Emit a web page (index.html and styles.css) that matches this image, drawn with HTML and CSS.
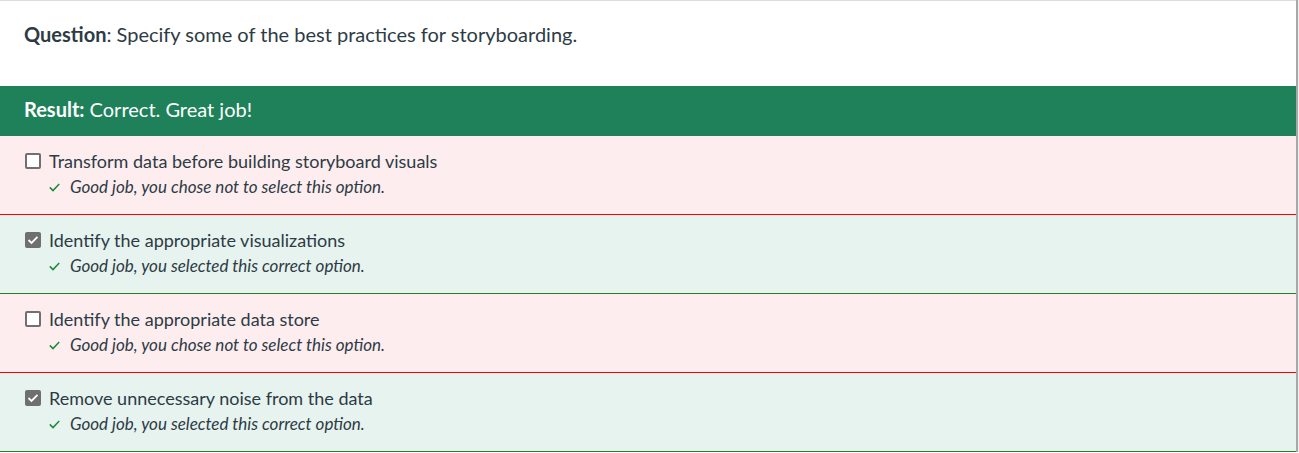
FILE: index.html
```html
<!DOCTYPE html>
<html lang="en">
<head>
<meta charset="utf-8">
<link rel="stylesheet" href="styles.css">
</head>
<body>
<div class="quiz">
  <div class="question"><strong>Question</strong>: Specify some of the best practices for storyboarding.</div>
  <div class="result"><strong>Result:</strong> Correct. Great job!</div>
  <div class="option wrong-bg">
    <div class="opt-line">
      <span class="box"></span>
      <span>Transform data before building storyboard visuals</span>
    </div>
    <div class="feedback">
      <svg class="tick" width="11" height="9" viewBox="0 0 11 9"><path d="M0.8 4.4 L4 7.6 L10.2 1" fill="none" stroke="#1b8a3a" stroke-width="1.5"/></svg>
      <em>Good job, you chose not to select this option.</em>
    </div>
  </div>
  <div class="option right-bg">
    <div class="opt-line">
      <span class="box checked"><svg width="12" height="10" viewBox="0 0 12 10"><path d="M1.5 5 L4.5 8 L10.5 1.8" fill="none" stroke="#fff" stroke-width="1.8"/></svg></span>
      <span>Identify the appropriate visualizations</span>
    </div>
    <div class="feedback">
      <svg class="tick" width="11" height="9" viewBox="0 0 11 9"><path d="M0.8 4.4 L4 7.6 L10.2 1" fill="none" stroke="#1b8a3a" stroke-width="1.5"/></svg>
      <em>Good job, you selected this correct option.</em>
    </div>
  </div>
  <div class="option wrong-bg">
    <div class="opt-line">
      <span class="box"></span>
      <span>Identify the appropriate data store</span>
    </div>
    <div class="feedback">
      <svg class="tick" width="11" height="9" viewBox="0 0 11 9"><path d="M0.8 4.4 L4 7.6 L10.2 1" fill="none" stroke="#1b8a3a" stroke-width="1.5"/></svg>
      <em>Good job, you chose not to select this option.</em>
    </div>
  </div>
  <div class="option right-bg">
    <div class="opt-line">
      <span class="box checked"><svg width="12" height="10" viewBox="0 0 12 10"><path d="M1.5 5 L4.5 8 L10.5 1.8" fill="none" stroke="#fff" stroke-width="1.8"/></svg></span>
      <span>Remove unnecessary noise from the data</span>
    </div>
    <div class="feedback">
      <svg class="tick" width="11" height="9" viewBox="0 0 11 9"><path d="M0.8 4.4 L4 7.6 L10.2 1" fill="none" stroke="#1b8a3a" stroke-width="1.5"/></svg>
      <em>Good job, you selected this correct option.</em>
    </div>
  </div>
</div>
</body>
</html>
```

FILE: styles.css
```css
html, body {
  margin: 0;
  padding: 0;
  background: #ffffff;
}
body {
  font-family: Lato, "Liberation Sans", sans-serif;
  color: #2d3b45;
}
.quiz {
  width: 1296px;
  border-top: 1px solid #dcdcdc;
  box-shadow: 2px 0 1px #a8a8a8;
  background: #fff;
}
.question {
  font-size: 20px;
  line-height: 27px;
  padding: 20px 24px 38px;
}
.question strong {
  font-weight: 700;
}
.result {
  background: #1e8159;
  color: #ffffff;
  font-size: 20px;
  height: 47px;
  line-height: 47px;
  padding: 0 24px 3px;
}
.result strong {
  font-weight: 700;
}
.option {
  height: 78px;
  box-sizing: content-box;
  padding: 0 24px 0 25px;
}
.wrong-bg {
  background: #fdedef;
  border-bottom: 1px solid #ff0000;
}
.right-bg {
  background: #e6f3ee;
  border-bottom: 1px solid #2a7a2a;
}
.opt-line {
  display: flex;
  align-items: center;
  gap: 8px;
  padding-top: 14px;
  height: 22px;
  font-size: 18px;
  line-height: 22px;
}
.box {
  width: 16px;
  height: 16px;
  box-sizing: border-box;
  border: 2px solid #707070;
  border-radius: 2px;
  background: #fff;
  display: flex;
  align-items: center;
  justify-content: center;
}
.box.checked {
  background: #6f6f6f;
  border-color: #6f6f6f;
}
.feedback {
  display: flex;
  align-items: center;
  margin-top: 4px;
  padding-left: 24px;
  height: 22px;
  font-size: 17px;
  line-height: 22px;
}
.tick {
  margin-right: 10px;
}
```
